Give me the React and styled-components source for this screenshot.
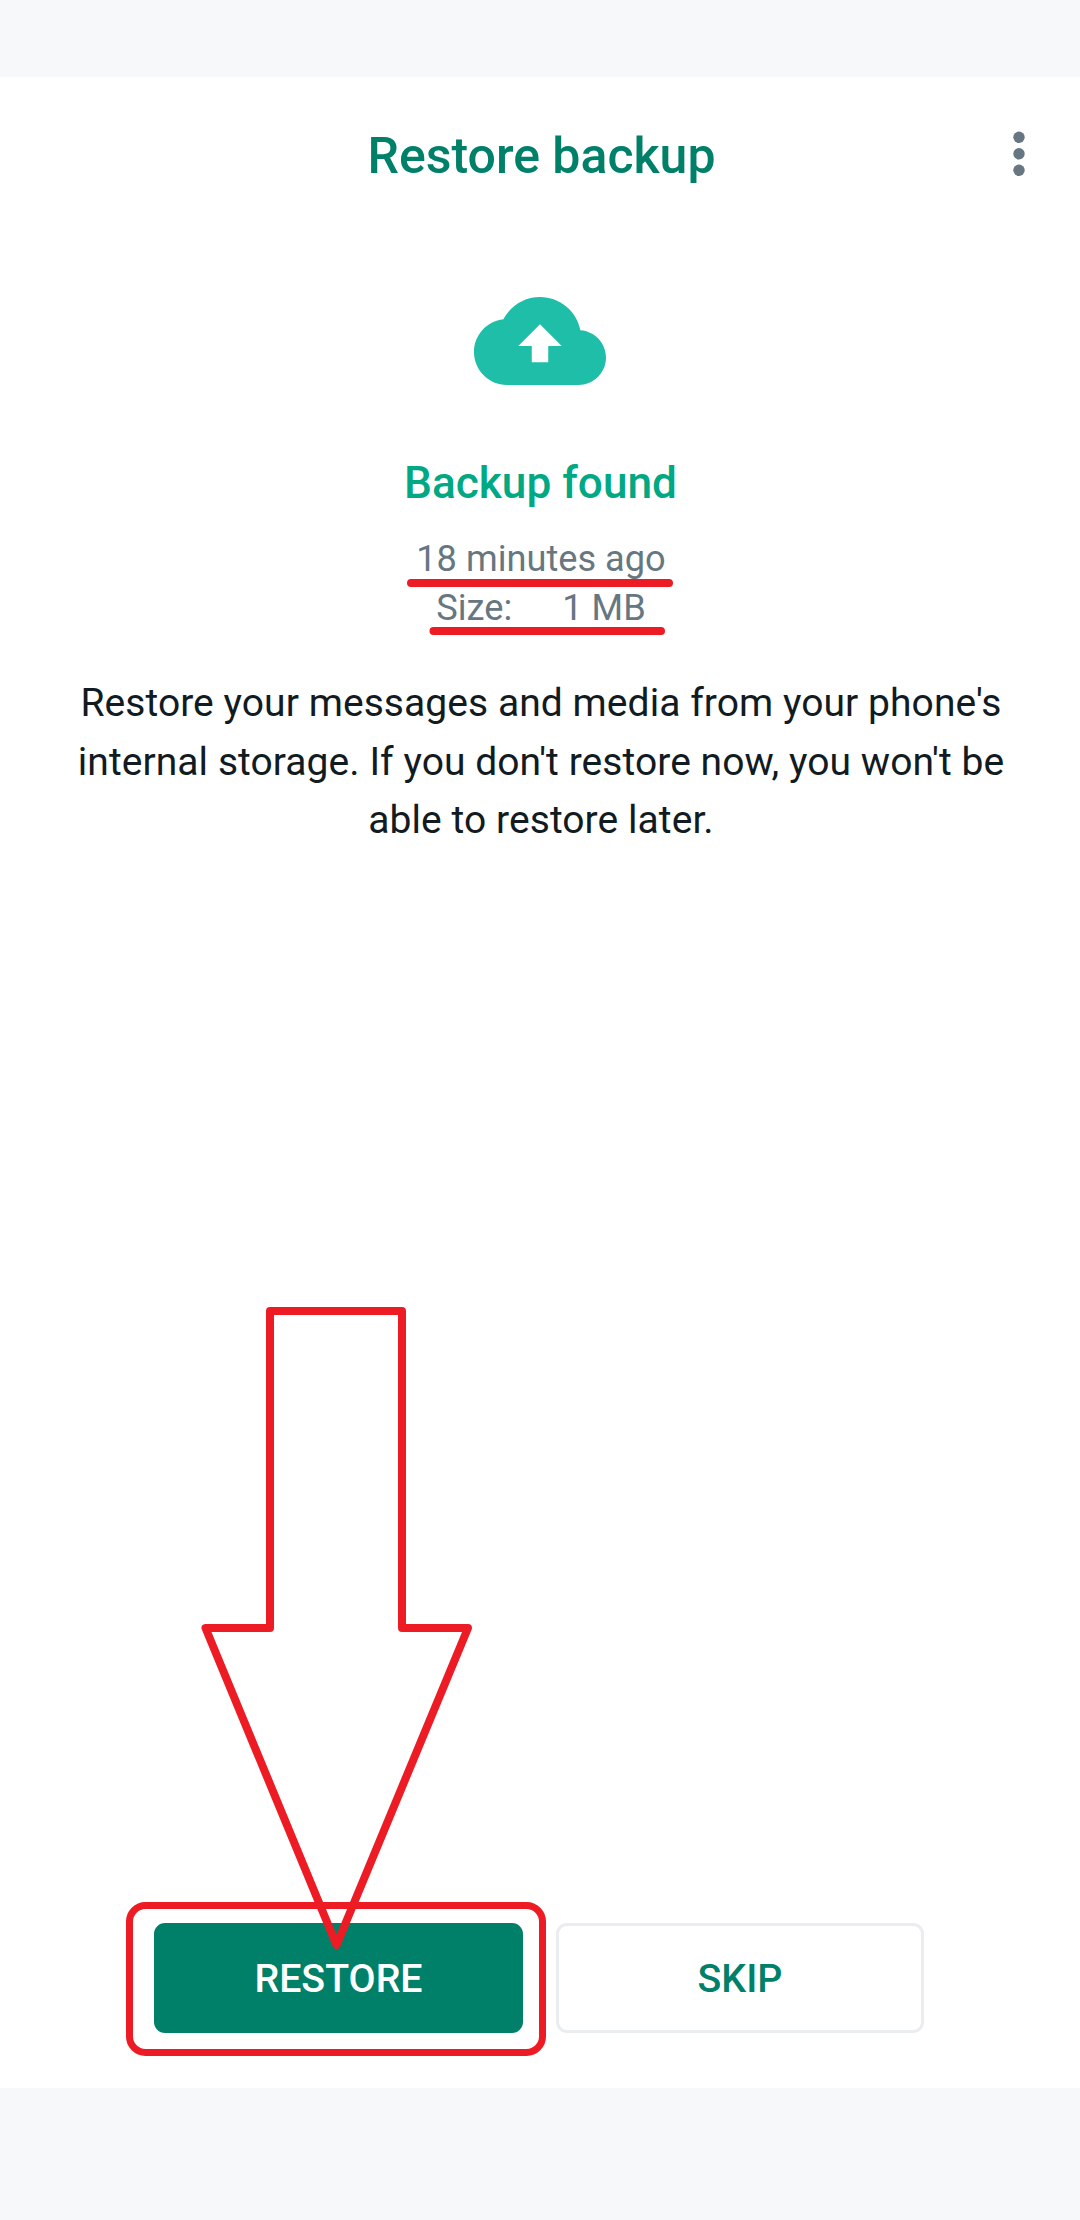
import React from "react";
import styled, { createGlobalStyle } from "styled-components";

const GlobalStyle = createGlobalStyle`
  * { box-sizing: border-box; }
  body { margin: 0; background: #ffffff; }
`;

const Screen = styled.div`
  position: relative;
  display: flex;
  flex-direction: column;
  width: 1080px;
  height: 2220px;
  overflow: hidden;
  background: #ffffff;
  font-family: Roboto, sans-serif;
`;

const SystemBar = styled.div`
  flex: none;
  height: ${(p) => p.$height}px;
  background: #f7f8fa;
`;

const Header = styled.header`
  display: grid;
  grid-template-columns: 122px 1fr 122px;
  align-items: center;
  height: 158px;
`;

const Title = styled.h1`
  grid-column: 2;
  margin: 0;
  font-size: 50px;
  line-height: 58px;
  font-weight: 500;
  text-align: center;
  color: #008069;
  padding-left: 3px;
`;

const MenuButton = styled.button`
  display: flex;
  justify-content: center;
  padding: 0 0 4px;
  border: 0;
  background: none;
`;

const Content = styled.main`
  flex: 1;
  display: flex;
  flex-direction: column;
  align-items: center;
  padding-top: 62px;
  text-align: center;
`;

const Subtitle = styled.h2`
  margin: 72px 0 0 1px;
  font-size: 44.2px;
  line-height: 52px;
  font-weight: 500;
  color: #00a884;
`;

const Details = styled.div`
  display: flex;
  flex-direction: column;
  align-items: center;
  margin: 25px 0 0 2px;
  font-size: 36.2px;
  line-height: 49px;
  color: #667781;
`;

const SizeRow = styled.div`
  display: flex;
  gap: 50px;
`;

const Description = styled.p`
  margin: 42px 0 0 2px;
  font-size: 39px;
  line-height: 58.5px;
  letter-spacing: 0.06px;
  color: #111b21;
  white-space: nowrap;
`;

const Actions = styled.footer`
  display: grid;
  grid-template-columns: 369px 368px;
  gap: 33px;
  padding: 0 156px 55px 154px;
`;

const Button = styled.button`
  height: 110px;
  padding: 2px 0 0;
  border: 3px solid ${(p) => (p.$primary ? "#008069" : "#e9edef")};
  border-radius: 11px;
  background: ${(p) => (p.$primary ? "#008069" : "#ffffff")};
  color: ${(p) => (p.$primary ? "#ffffff" : "#008069")};
  font-family: inherit;
  font-size: 39.3px;
  font-weight: 500;
`;

const Annotations = styled.svg`
  position: absolute;
  inset: 0;
  pointer-events: none;
  fill: none;
  stroke: #ed1c24;
  stroke-width: 8;
  stroke-linecap: round;
  stroke-linejoin: round;
`;

const MoreIcon = () => (
  <svg width="12" height="46" viewBox="0 0 12 46" fill="#667781">
    <circle cx="6" cy="6.3" r="5.7" />
    <circle cx="6" cy="22.8" r="5.7" />
    <circle cx="6" cy="39.3" r="5.7" />
  </svg>
);

const CloudIcon = () => (
  <svg width="132" height="88" viewBox="0 4 24 16" fill="#1fbea8">
    <path
      fillRule="evenodd"
      d="M19.35 10.04C18.67 6.59 15.64 4 12 4 9.11 4 6.6 5.64 5.35 8.04 2.34 8.36 0 10.91 0 14c0 3.31 2.69 6 6 6h13c2.76 0 5-2.24 5-5 0-2.64-2.05-4.78-4.65-4.96zM13.5 12.9v2.95h-3V12.9H8.05L12 8.95l3.95 3.95z"
    />
  </svg>
);

export default function App() {
  return (
    <Screen>
      <GlobalStyle />
      <SystemBar $height={77} />
      <Header>
        <Title>Restore backup</Title>
        <MenuButton aria-label="More options">
          <MoreIcon />
        </MenuButton>
      </Header>
      <Content>
        <CloudIcon />
        <Subtitle>Backup found</Subtitle>
        <Details>
          <span>18 minutes ago</span>
          <SizeRow>
            <span>Size:</span>
            <span>1 MB</span>
          </SizeRow>
        </Details>
        <Description>
          Restore your messages and media from your phone's
          <br />
          internal storage. If you don't restore now, you won't be
          <br />
          able to restore later.
        </Description>
      </Content>
      <Actions>
        <Button $primary>RESTORE</Button>
        <Button>SKIP</Button>
      </Actions>
      <SystemBar $height={132} />
      <Annotations width="1080" height="2220" viewBox="0 0 1080 2220">
        <path d="M411 583H669M433.5 631H661" />
        <path d="M270 1311H402V1628H468L336.5 1945L205.5 1628H270Z" />
        <rect x="129.5" y="1905.5" width="413" height="147" rx="16" strokeWidth="7" />
      </Annotations>
    </Screen>
  );
}
